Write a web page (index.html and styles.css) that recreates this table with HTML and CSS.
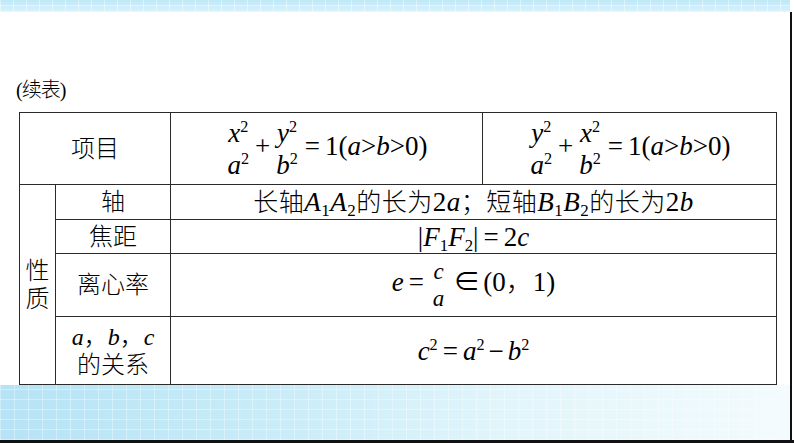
FILE: index.html
```html
<!DOCTYPE html>
<html lang="zh">
<head>
<meta charset="utf-8">
<title>续表</title>
<link rel="stylesheet" href="styles.css">
</head>
<body>
<div class="slide">
  <div class="topband"></div>
  <div class="frame">
    <div class="content">
      <div class="title">(续表)</div>
      <table class="tbl">
        <colgroup><col class="c1"><col class="c2"><col class="c3"><col class="c4"></colgroup>
        <tr class="r-head">
          <td colspan="2" class="cn">项目</td>
          <td class="math big">
            <span class="frac"><span class="num"><i>x</i><sup>2</sup></span><span class="den"><i>a</i><sup>2</sup></span></span><span class="op">+</span><span class="frac"><span class="num"><i>y</i><sup>2</sup></span><span class="den"><i>b</i><sup>2</sup></span></span><span class="eq">=</span>1(<i>a</i>&gt;<i>b</i>&gt;0)
          </td>
          <td class="math big">
            <span class="frac"><span class="num"><i>y</i><sup>2</sup></span><span class="den"><i>a</i><sup>2</sup></span></span><span class="op">+</span><span class="frac"><span class="num"><i>x</i><sup>2</sup></span><span class="den"><i>b</i><sup>2</sup></span></span><span class="eq">=</span>1(<i>a</i>&gt;<i>b</i>&gt;0)
          </td>
        </tr>
        <tr class="r-axis">
          <td rowspan="4" class="cn vert">性<br>质</td>
          <td class="cn">轴</td>
          <td colspan="2" class="cn axis">长轴<i class="v">A</i><sub>1</sub><i class="v">A</i><sub>2</sub>的长为<span class="d">2</span><i class="v">a</i>；短轴<i class="v">B</i><sub>1</sub><i class="v">B</i><sub>2</sub>的长为<span class="d">2</span><i class="v">b</i></td>
        </tr>
        <tr class="r-focal">
          <td class="cn">焦距</td>
          <td colspan="2" class="math mid">|<i>F</i><sub>1</sub><i>F</i><sub>2</sub>|<span class="eq">=</span>2<i>c</i></td>
        </tr>
        <tr class="r-ecc">
          <td class="cn">离心率</td>
          <td colspan="2" class="math mid"><i>e</i><span class="eq">=</span><span class="frac small"><span class="num"><i>c</i></span><span class="den"><i>a</i></span></span><span class="in">∈</span>(0<span class="cn">，</span>1)</td>
        </tr>
        <tr class="r-rel">
          <td class="cn rel"><span class="math"><i>a</i></span>，<span class="math"><i>b</i></span>，<span class="math"><i>c</i></span><br>的关系</td>
          <td colspan="2" class="math mid"><i>c</i><sup>2</sup><span class="eq">=</span><i>a</i><sup>2</sup><span class="op">−</span><i>b</i><sup>2</sup></td>
        </tr>
      </table>
    </div>
    <div class="bottomband"></div>
  </div>
  <div class="bottombar"></div>
</div>
</body>
</html>
```
FILE: styles.css
```css
html, body {
  margin: 0;
  padding: 0;
  background: #ffffff;
}
body {
  width: 794px;
  height: 443px;
  overflow: hidden;
  font-family: "Liberation Serif", "Noto Sans CJK SC", serif;
  color: #000;
}
.slide {
  width: 794px;
  height: 443px;
  display: flex;
  flex-direction: column;
}
.topband {
  width: 790px;
  height: 12px;
  flex: none;
  background-color: #c6ebf8;
  background-image:
    repeating-linear-gradient(90deg, rgba(255,255,255,0.45) 0 1px, transparent 1px 13px),
    repeating-linear-gradient(0deg, rgba(255,255,255,0.45) 0 1px, transparent 1px 6px),
    linear-gradient(180deg, #bfe8f7, #d8f2fb);
}
.frame {
  width: 790px;
  flex: 1;
  display: flex;
  flex-direction: column;
  border-right: 2px solid #111;
}
.content {
  flex: 1;
  padding: 65px 0 0 16px;
}
.title {
  font-size: 20px;
  line-height: 26px;
  height: 26px;
  font-weight: 300;
  letter-spacing: -1px;
}
.tbl {
  margin: 9px 0 0 3px;
  width: 757px;
  table-layout: fixed;
  border-collapse: collapse;
}
.c1 { width: 36px; }
.c2 { width: 115px; }
.c3 { width: 312px; }
.c4 { width: 294px; }
.tbl td {
  border: 1px solid #2a2a2a;
  padding: 0;
  text-align: center;
  vertical-align: middle;
  font-size: 24px;
  line-height: 28px;
  white-space: nowrap;
}
.r-head { height: 72px; }
.r-axis { height: 35px; }
.r-focal { height: 34px; }
.r-ecc { height: 63px; }
.r-rel { height: 68px; }
.cn {
  font-weight: 300;
}
.vert {
  line-height: 30px;
}
.rel {
  line-height: 27px;
}
.math {
  font-family: "Liberation Serif", "Noto Sans CJK SC", serif;
}
.tbl td.big {
  font-size: 27px;
}
.tbl td.mid {
  font-size: 27px;
}
.tbl td.axis {
  font-size: 25px;
  letter-spacing: 0.5px;
}
i {
  font-style: italic;
  font-family: "Liberation Serif", serif;
}
i.v, .d {
  font-size: 27px;
  font-family: "Liberation Serif", serif;
  font-weight: 400;
}
sup {
  font-size: 0.6em;
  line-height: 0;
  vertical-align: 0.62em;
}
sub {
  font-size: 0.62em;
  line-height: 0;
  vertical-align: -0.3em;
  font-weight: 400;
  font-family: "Liberation Serif", serif;
}
.axis sub {
  font-size: 17px;
}
.frac {
  display: inline-flex;
  flex-direction: column;
  align-items: center;
  vertical-align: middle;
  line-height: 32px;
  margin: 0 1px;
}
.frac .num, .frac .den {
  display: block;
  padding: 0 1px;
}
.frac.small {
  line-height: 27px;
  font-size: 23px;
  margin: 0 6px 0 3px;
}
.op {
  margin: 0 4px;
}
.eq {
  margin: 0 5px;
}
.in {
  margin: 0 3px 0 2px;
}
.bottomband {
  height: 55px;
  flex: none;
  background-image:
    repeating-linear-gradient(90deg, rgba(255,255,255,0.35) 0 1px, transparent 1px 14px),
    repeating-linear-gradient(0deg, rgba(255,255,255,0.35) 0 1px, transparent 1px 10px),
    linear-gradient(90deg, #b6e3f5 0%, #c9ecf8 35%, #e2f5fb 65%, #f3fbfd 100%);
}
.bottombar {
  height: 3px;
  flex: none;
  background: #111;
}
```
